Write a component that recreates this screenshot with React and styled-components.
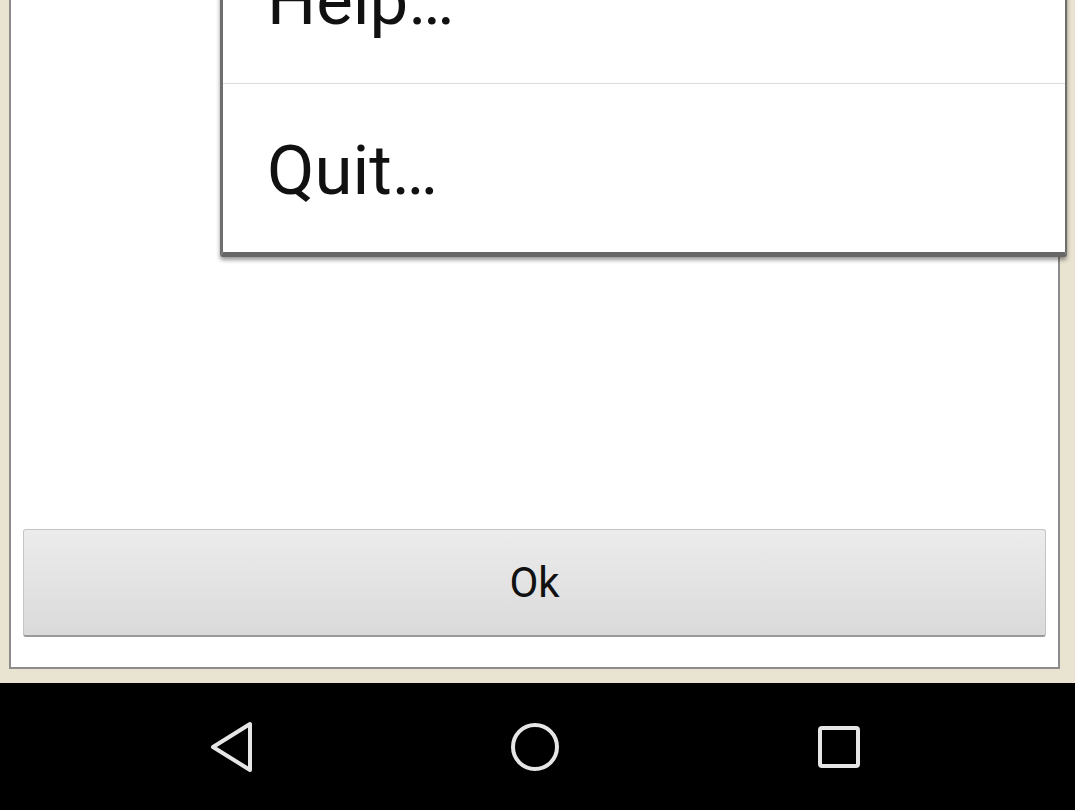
import styled, { createGlobalStyle } from "styled-components";

const GlobalStyle = createGlobalStyle`
  html, body {
    margin: 0;
    padding: 0;
    background: #000;
  }
  #root {
    width: 1075px;
    height: 810px;
    overflow: hidden;
  }
`;

const App = () => {
  return (
    <Screen>
      <GlobalStyle />
      <Desktop>
        <Panel>
          <Fill />
          <OkButton>Ok</OkButton>
        </Panel>
        <Menu>
          <MenuItem>Help…</MenuItem>
          <MenuItem $last>Quit…</MenuItem>
        </Menu>
      </Desktop>
      <NavBar>
        <NavIcon width="56" height="56" viewBox="0 0 56 56">
          <path
            d="M47 5 L47 51 L10 28 Z"
            fill="none"
            stroke="#e6e6e6"
            strokeWidth="4"
            strokeLinejoin="round"
          />
        </NavIcon>
        <NavIcon width="56" height="56" viewBox="0 0 56 56">
          <circle cx="28" cy="28" r="22" fill="none" stroke="#e6e6e6" strokeWidth="4" />
        </NavIcon>
        <NavIcon width="56" height="56" viewBox="0 0 56 56">
          <rect
            x="9"
            y="9"
            width="38"
            height="38"
            rx="2"
            fill="none"
            stroke="#e6e6e6"
            strokeWidth="4"
          />
        </NavIcon>
      </NavBar>
    </Screen>
  );
};

const Screen = styled.div`
  width: 1075px;
  height: 810px;
  display: flex;
  flex-direction: column;
  font-family: Roboto, "Noto Sans", sans-serif;
`;

const Desktop = styled.div`
  position: relative;
  height: 683px;
  background: #e9e3d2;
  padding: 0 15px 14px 9px;
  box-sizing: border-box;
  display: flex;
`;

const Panel = styled.div`
  flex: 1;
  background: #fff;
  border: 2px solid #8c8c8c;
  border-top: none;
  display: flex;
  flex-direction: column;
  padding: 0 12px 30px 12px;
`;

const Fill = styled.div`
  flex: 1;
`;

const OkButton = styled.button`
  height: 108px;
  border: 1px solid #c4c4c4;
  border-bottom: 2px solid #9a9a9a;
  border-radius: 3px;
  background: linear-gradient(#ececec, #dadada);
  font-family: Roboto, "Noto Sans", sans-serif;
  font-size: 42px;
  color: #111;
  padding: 0;
`;

const Menu = styled.div`
  position: absolute;
  left: 220px;
  top: -84px;
  width: 842px;
  background: #fff;
  border-left: 3px solid #6e6e6e;
  border-right: 2px solid #6e6e6e;
  border-bottom: 5px solid #666;
  border-radius: 0 0 3px 3px;
  box-shadow: 0 3px 4px rgba(0, 0, 0, 0.4);
`;

const MenuItem = styled.div`
  height: 168px;
  display: flex;
  align-items: center;
  padding-left: 44px;
  box-sizing: border-box;
  font-size: 69px;
  color: #111;
  border-bottom: ${(p) => (p.$last ? "none" : "1px solid #dcdcdc")};
  padding-top: ${(p) => (p.$last ? "4px" : "2px")};
`;

const NavBar = styled.div`
  flex: 1;
  background: #000;
  display: flex;
  align-items: center;
  justify-content: center;
  gap: 248px;
  padding-right: 6px;
`;

const NavIcon = styled.svg`
  display: block;
`;

export default App;
